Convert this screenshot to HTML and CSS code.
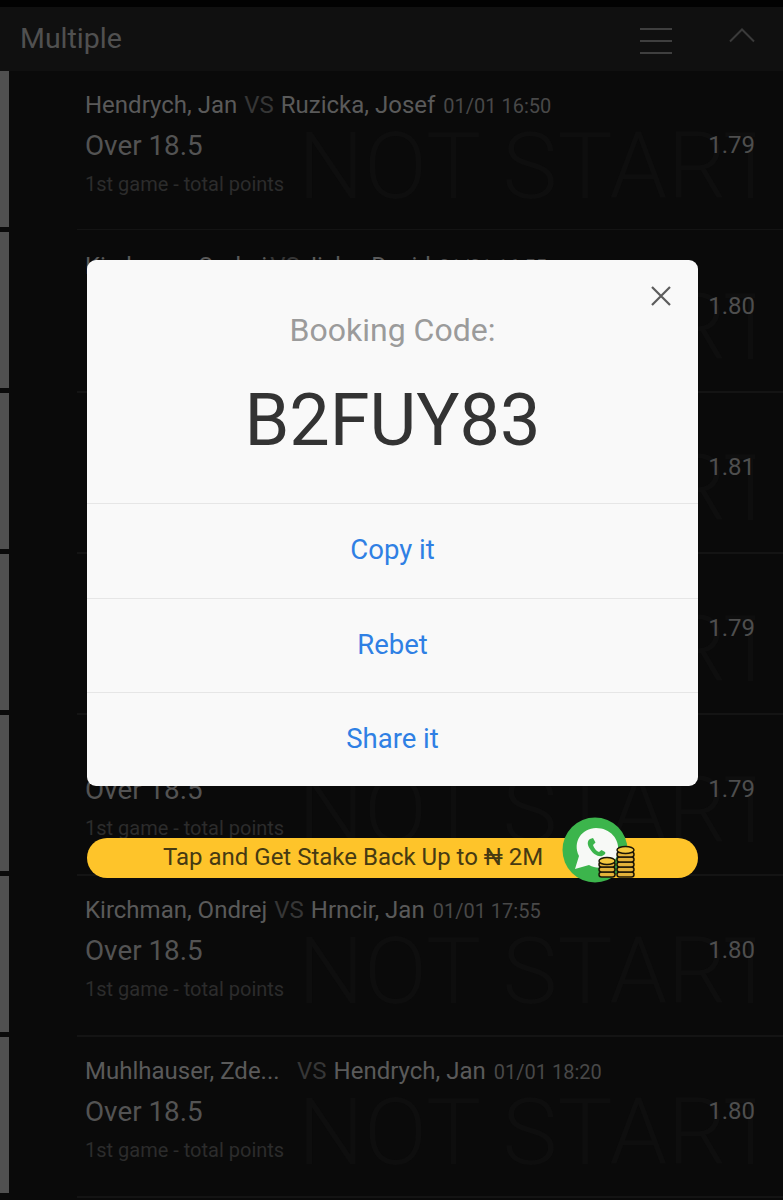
FILE: index.html
```html
<!DOCTYPE html>
<html lang="en">
  <head>
    <meta charset="UTF-8">
    <meta name="viewport" content="width=device-width,initial-scale=1.0">
    <title>Booking Code</title>
    <link rel="stylesheet" href="styles.css">
  </head>
  <body>
    <div class="screen">
      <header class="top">
        <span class="top-title">Multiple</span>
        <span class="menu"><i></i><i></i><i></i></span>
        <svg class="chev" width="28" height="16" viewBox="0 0 28 16"><path d="M2 14.500L14 2.500L26 14.500" fill="none" stroke="#3a3a3a" stroke-width="2"/></svg>
      </header>

      <div class="row">
        <div class="row-in">
          <div class="mark">NOT STARTED</div>
          <div class="teams"><span class="name">Hendrych, Jan</span><span class="vs">VS</span><span class="name">Ruzicka, Josef</span><span class="time">01/01 16:50</span></div>
          <div class="pick"><span>Over 18.5</span><span class="odd">1.79</span></div>
          <div class="market">1st game - total points</div>
        </div>
      </div>
      <div class="row">
        <div class="row-in">
          <div class="mark">NOT STARTED</div>
          <div class="teams"><span class="name">Kirchman, Ondrej</span><span class="vs tight">VS</span><span class="name">Jiska, David</span><span class="time">01/01 16:55</span></div>
          <div class="pick"><span></span><span class="odd">1.80</span></div>
        </div>
      </div>
      <div class="row">
        <div class="row-in">
          <div class="mark">NOT STARTED</div>
          <div class="teams"></div>
          <div class="pick"><span></span><span class="odd">1.81</span></div>
        </div>
      </div>
      <div class="row">
        <div class="row-in">
          <div class="mark">NOT STARTED</div>
          <div class="teams"></div>
          <div class="pick"><span></span><span class="odd">1.79</span></div>
        </div>
      </div>
      <div class="row">
        <div class="row-in">
          <div class="mark">NOT STARTED</div>
          <div class="teams"></div>
          <div class="pick"><span>Over 18.5</span><span class="odd">1.79</span></div>
          <div class="market">1st game - total points</div>
        </div>
      </div>
      <div class="row">
        <div class="row-in">
          <div class="mark">NOT STARTED</div>
          <div class="teams"><span class="name">Kirchman, Ondrej</span><span class="vs">VS</span><span class="name">Hrncir, Jan</span><span class="time">01/01 17:55</span></div>
          <div class="pick"><span>Over 18.5</span><span class="odd">1.80</span></div>
          <div class="market">1st game - total points</div>
        </div>
      </div>
      <div class="row">
        <div class="row-in">
          <div class="mark">NOT STARTED</div>
          <div class="teams"><span class="name clip">Muhlhauser, Zde...</span><span class="vs">VS</span><span class="name">Hendrych, Jan</span><span class="time">01/01 18:20</span></div>
          <div class="pick"><span>Over 18.5</span><span class="odd">1.80</span></div>
          <div class="market">1st game - total points</div>
        </div>
      </div>

      <div class="modal">
        <svg class="close" width="22" height="22" viewBox="0 0 22 22"><path d="M2 2L20 20M20 2L2 20" fill="none" stroke="#5c5c5c" stroke-width="2.200"/></svg>
        <div class="modal-label">Booking Code:</div>
        <div class="modal-code">B2FUY83</div>
        <div class="modal-btn">Copy it</div>
        <div class="modal-btn">Rebet</div>
        <div class="modal-btn">Share it</div>
      </div>

      <div class="promo">
        <span class="promo-text">Tap and Get Stake Back Up to ₦ 2M</span>
        <svg class="promo-icon" width="80" height="68" viewBox="0 0 80 68">
          <circle cx="33" cy="33" r="32.500" fill="#3cb54c"/>
          <path d="M13 52L17 39C10 25 20 11 34 11C48 11 58 22 56 35C54 48 39 55 27 48Z" fill="#f7f9f6"/>
          <path d="M28 22C25 24 25 28 28 32C31 37 36 40 40 39C43 38 44 36 43 35L39.500 33L37 35C34 34 32 31 31 28L33.500 25.500L31 21Z" fill="#3cb54c"/>
          <g stroke="#1c1606" stroke-width="1.500" fill="#e3b23a">
            <rect x="37" y="55" width="16" height="5" rx="2.500"/>
            <rect x="37" y="50" width="16" height="5" rx="2.500"/>
            <rect x="37" y="45" width="16" height="5" rx="2.500"/>
            <ellipse cx="45" cy="44" rx="8" ry="3.500" fill="#f5c93f"/>
            <rect x="55" y="55" width="17" height="5" rx="2.500"/>
            <rect x="55" y="50" width="17" height="5" rx="2.500"/>
            <rect x="55" y="45" width="17" height="5" rx="2.500"/>
            <rect x="55" y="40" width="17" height="5" rx="2.500"/>
            <rect x="55" y="35" width="17" height="5" rx="2.500"/>
            <ellipse cx="63.500" cy="33" rx="8.500" ry="3.500" fill="#f5c93f"/>
          </g>
        </svg>
      </div>
    </div>
  </body>
</html>
```

FILE: styles.css
```css
*{box-sizing:border-box}
html,body{margin:0;background:#0a0a0a}
body{font-family:Roboto,"Liberation Sans",sans-serif;color:#5c5c5c}
.screen{position:relative;width:783px;height:1200px;overflow:hidden;padding-top:7px;background:#0a0a0a}
.screen::before{content:"";position:absolute;left:0;right:0;top:0;height:7px;background:#020202}

.top{height:64px;background:#101010;display:flex;align-items:center;padding:0 28px 2px 20px}
.top-title{flex:1;font-size:28.500px;color:#505050}
.menu{display:flex;flex-direction:column;gap:10px;width:32px;margin-right:56px;margin-top:5px}
.menu i{display:block;height:2px;background:#3f3f3f}
.chev{margin-top:-7px;margin-right:-1px}

.row{height:161px;padding-left:77px;position:relative}
.row::before{content:"";position:absolute;left:0;top:0;width:9px;height:156px;background:#505050}
.row-in{position:relative;height:159px;overflow:hidden;border-bottom:1px solid #141414;padding:20px 28px 0 8px}
.row+.row .row-in{height:161px;border-bottom-width:2px}
.teams{display:flex;align-items:baseline;height:30px;font-size:24px;color:#5c5c5c;white-space:nowrap}
.name{color:#5a5a5a}
.vs{margin:0 7px;color:#363636}
.vs.tight{margin:0 4px 0 3px}
.clip{width:205px}
.time{margin-left:8px;font-size:20px;color:#484848}
.pick{position:relative;display:flex;justify-content:space-between;align-items:center;height:32px;margin-top:8px;font-size:27.800px;color:#535353}
.odd{font-size:24px;color:#4e4e4e}
.market{position:relative;margin-top:11px;font-size:20px;color:#2c2c2c}
.mark{position:absolute;left:221px;right:28px;top:41px;overflow:hidden;white-space:nowrap;font-size:93px;line-height:110px;font-weight:300;color:#0e0e0e}

.modal{position:absolute;left:87px;top:260px;width:611px;height:526px;background:#f9f9f9;border-radius:9px;text-align:center}
.close{position:absolute;right:26px;top:25px}
.modal-label{padding-top:52px;font-size:32px;line-height:36px;color:#9b9b9b}
.modal-code{height:156px;padding-top:37px;font-size:72px;line-height:72px;color:#333;border-bottom:1px solid #e6e6e6}
.modal-btn{height:94.500px;line-height:91px;font-size:27.500px;color:#2f80e4;border-bottom:1px solid #e6e6e6}
.modal-btn:last-child{border-bottom:0}

.promo{position:absolute;left:87px;top:838px;width:611px;height:40px;border-radius:20px;background:#fec42a;display:flex;align-items:center;padding:0 0 2px 76px}
.promo-text{font-size:24px;color:#463a12;white-space:nowrap}
.promo-icon{position:absolute;left:475px;top:-21px}
```
